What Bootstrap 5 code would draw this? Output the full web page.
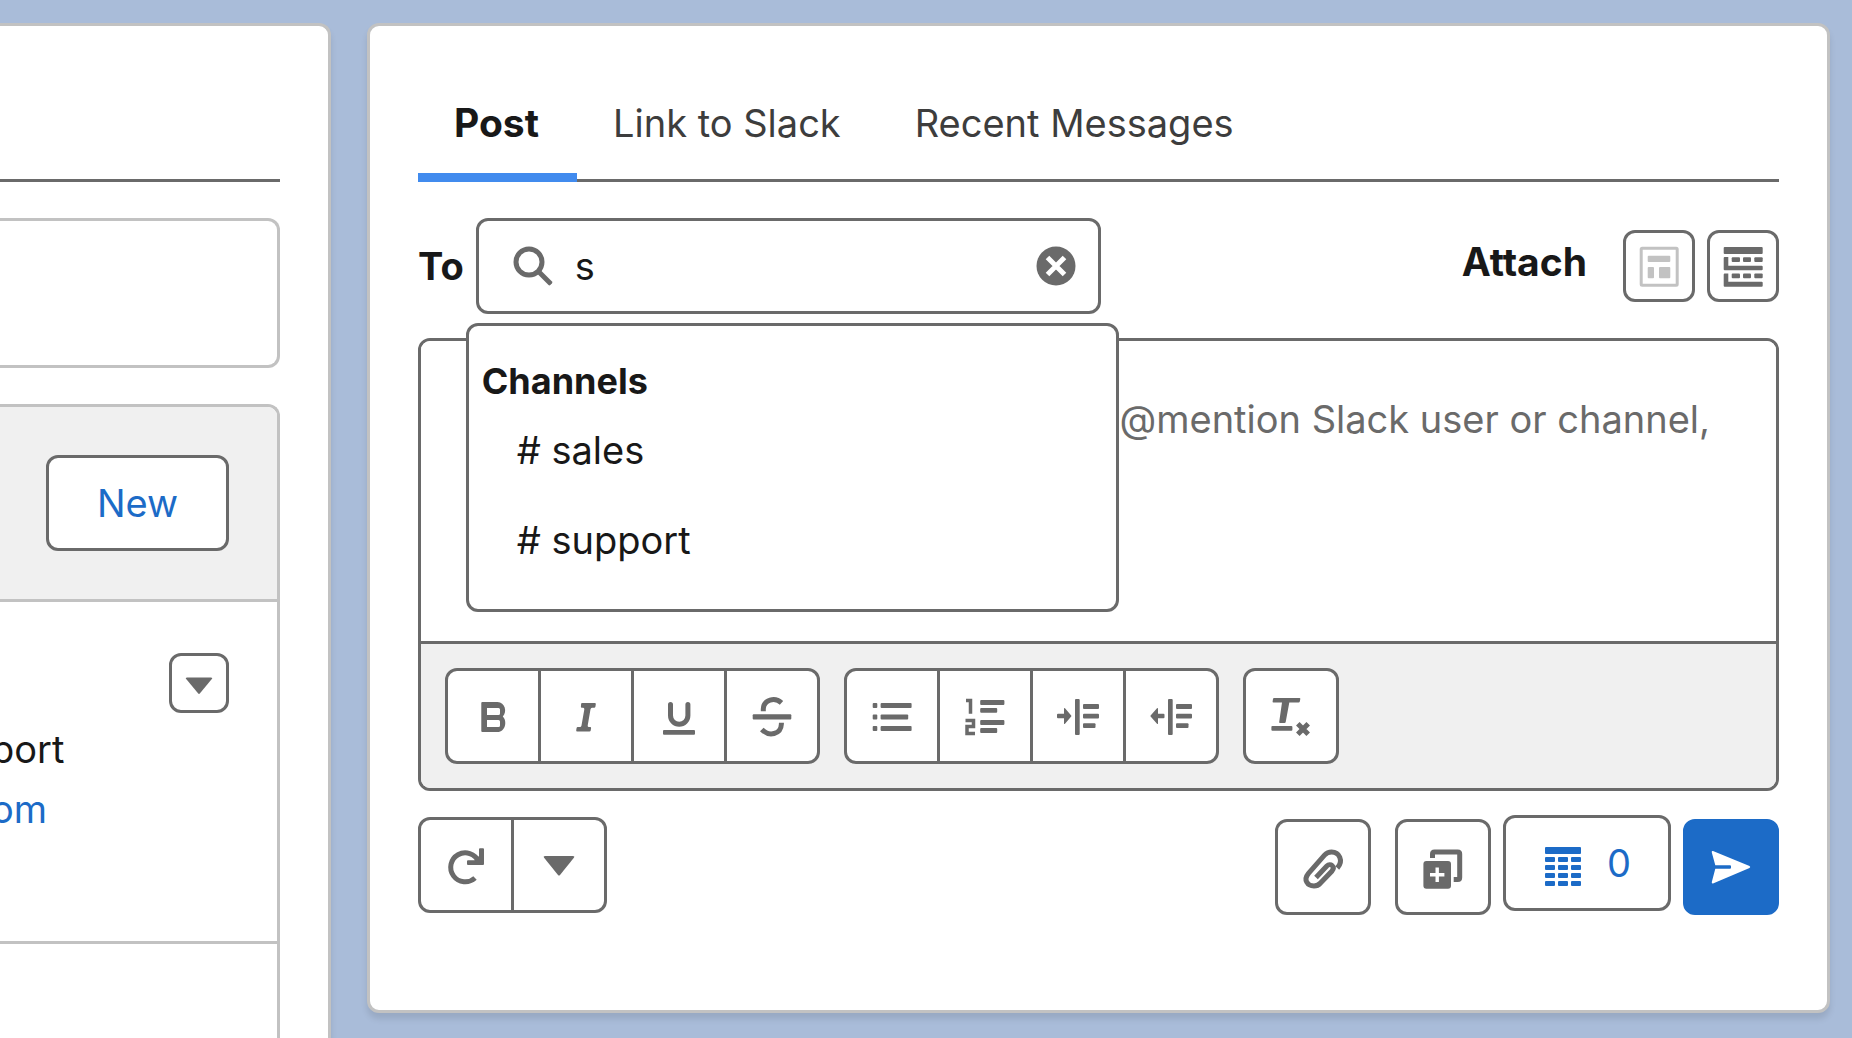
<!DOCTYPE html>
<html lang="en">
<head>
<meta charset="utf-8">
<meta name="viewport" content="width=device-width, initial-scale=1">
<title>Slack for Salesforce</title>
<link rel="stylesheet" href="https://cdn.jsdelivr.net/npm/bootstrap@5.3.0/dist/css/bootstrap.min.css">
<style>
:root { --ink:#181818; --line:#6a6a6a; --soft:#c2c2c2; --blue:#1c6bc7; --fill:#f0f0f0; }
body { background:#a9bcd9; color:var(--ink); font-family:Inter,"Liberation Sans",sans-serif; font-size:38px; line-height:60px; }
.page { gap:36px; padding:23px 22px 0 0; }
.panel { background:#fff; border:3px solid var(--soft); border-radius:12px; box-shadow:0 6px 6px rgba(0,0,0,.1); }
.side { flex:0 0 331px; border-left:0; border-bottom:0; border-radius:0 12px 0 0; padding:153px 48px 0 0; }
.side-rule { border-top:3px solid var(--line); margin-bottom:36px; }
.side-box { border:3px solid var(--soft); border-left:0; border-radius:0 12px 12px 0; }
.side-empty { height:150px; margin-bottom:36px; }
.side-list { border-bottom:0; border-bottom-right-radius:0; }
.side-head { background:var(--fill); border-bottom:3px solid var(--soft); border-top-right-radius:9px; padding:48px 48px 48px 0; }
.side-row { border-bottom:3px solid var(--soft); padding:51px 48px 0 0; height:342px; }
.side-text { margin:6px 0 0 -9px; }
.side-text a { color:var(--blue); }
.btn-line { --bs-btn-color:var(--line); --bs-btn-bg:#fff; --bs-btn-border-color:var(--line); --bs-btn-border-width:3px; --bs-btn-border-radius:12px; --bs-btn-padding-x:0; --bs-btn-padding-y:0; --bs-btn-hover-bg:#f3f3f3; --bs-btn-hover-color:var(--line); --bs-btn-hover-border-color:var(--line); --bs-btn-font-size:38px; --bs-btn-line-height:60px; --bs-btn-disabled-opacity:1; --bs-btn-disabled-bg:#fff; --bs-btn-disabled-border-color:var(--line); --bs-btn-disabled-color:var(--soft); display:inline-flex; align-items:center; justify-content:center; }
.btn-blue-text { --bs-btn-color:var(--blue); --bs-btn-hover-color:var(--blue); }
.sz-xs { width:60px; height:60px; }
.sz-sm { width:72px; height:72px; }
.sz-lg { width:96px; height:96px; }
.btn-new { width:183px; height:96px; flex:none; }
.btn-count { width:168px; height:96px; gap:24px; }
.btn-group > .btn-line { flex:0 0 96px; }
.btn-group > .btn.btn-line:not(:first-child) { margin-left:-3px !important; }
.btn-send { --bs-btn-bg:var(--blue); --bs-btn-color:#fff; --bs-btn-border-color:var(--blue); --bs-btn-hover-bg:#0b5cab; --bs-btn-hover-color:#fff; --bs-btn-hover-border-color:#0b5cab; }
.btn-clear, .btn-clear:hover { color:var(--line); }
.btn svg, .search svg { width:40px; height:40px; fill:currentColor; overflow:visible; flex:none; }
.btn svg .st, .search svg .st { fill:none; stroke:currentColor; stroke-width:5; }
.main { padding:67px 48px 95px; }
.tabs { border-bottom:3px solid var(--line); }
.tabs .nav-link { color:#3d3d3d; padding:0 38px 20px 36px; margin-bottom:-3px; border-bottom:9px solid transparent; }
.tabs .nav-link.active { color:var(--ink); font-size:39px; font-weight:700; border-color:#418bee; }
.to-row { margin-top:36px; gap:12px; }
.to-row label { font-weight:700; }
.search { width:625px; height:96px; border:3px solid var(--line); border-radius:12px; padding:0 22px 0 34px; gap:22px; color:var(--line); background:#fff; }
.search .form-control { border:0; padding:0; font-size:38px; line-height:60px; color:var(--ink); background:transparent; box-shadow:none; }
.suggest { top:105px; left:-10px; width:653px; border:3px solid var(--line); border-radius:12px; background:#fff; padding:31px 13px 24px; z-index:5; }
.suggest h2 { font-size:36px; line-height:48px; font-weight:700; margin:0; }
.suggest a { display:block; padding:15px 35px; color:var(--ink); text-decoration:none; }
.attach-label { font-size:39px; font-weight:700; padding-bottom:8px; margin-right:24px; }
.editor { margin-top:24px; border:3px solid var(--line); border-radius:12px; overflow:hidden; }
.editor textarea { display:block; height:300px; border:0; border-radius:0; resize:none; padding:48px 66px 0 48px; font-size:38px; line-height:60px; text-align:right; box-shadow:none; overflow:hidden; }
.editor textarea::placeholder { color:var(--line); }
.editor-bar { background:var(--fill); border-top:3px solid var(--line); padding:24px; gap:24px; }
.actions { margin-top:24px; min-height:100px; }
.gap-send { gap:12px; }
.gap-clip { margin-right:12px; }
</style>
</head>
<body>
<div class="page d-flex vh-100 overflow-hidden">
  <aside class="panel side d-flex flex-column overflow-hidden">
    <div class="side-rule flex-shrink-0"></div>
    <div class="side-box side-empty flex-shrink-0"></div>
    <div class="side-box side-list flex-grow-1">
      <div class="side-head d-flex justify-content-end">
        <button type="button" class="btn btn-line btn-blue-text btn-new">New</button>
      </div>
      <div class="side-row">
        <div class="d-flex justify-content-end">
          <button type="button" class="btn btn-line sz-xs" aria-label="Row actions"><svg viewBox="0 0 40 40"><path d="M8 14.5H32q2 0 .8 1.6L21 30.300q-1 1.200-2 0L7.200 16.100Q6 14.500 8 14.500Z"/></svg></button>
        </div>
        <div class="side-text">
          <div>port</div>
          <div><a href="#" class="text-decoration-none">om</a></div>
        </div>
      </div>
    </div>
  </aside>

  <main class="panel main flex-grow-1 align-self-start">
    <ul class="nav tabs">
      <li class="nav-item"><a class="nav-link active" aria-current="page" href="#">Post</a></li>
      <li class="nav-item"><a class="nav-link" href="#">Link to Slack</a></li>
      <li class="nav-item"><a class="nav-link" href="#">Recent Messages</a></li>
    </ul>

    <div class="to-row d-flex align-items-center">
      <label for="to">To</label>
      <div class="position-relative">
        <div class="search d-flex align-items-center">
          <svg viewBox="0 0 40 40" aria-hidden="true"><circle class="st" cx="16" cy="16" r="13"/><path d="M24.500 28 28 24.500 39 35.500q.8.900 0 1.800L37.300 39q-.9.800-1.800 0Z"/></svg>
          <input id="to" type="text" class="form-control" value="s" autocomplete="off">
          <button type="button" class="btn btn-clear p-0 border-0 d-flex" aria-label="Clear"><svg viewBox="0 0 40 40"><circle cx="20" cy="20" r="19.500"/><path d="M11.500 11.500 28.500 28.500M28.500 11.500 11.500 28.500" stroke="#fff" stroke-width="5"/></svg></button>
        </div>
        <div class="suggest position-absolute">
          <h2>Channels</h2>
          <a href="#"># sales</a>
          <a href="#"># support</a>
        </div>
      </div>
      <div class="ms-auto d-flex align-items-center gap-send">
        <span class="attach-label">Attach</span>
        <button type="button" class="btn btn-line sz-sm" disabled aria-label="Attach record layout"><svg viewBox="0 0 40 40"><rect x="2.200" y="2.200" width="36" height="37" rx="1" fill="none" stroke="currentColor" stroke-width="3"/><rect x="8.700" y="9.700" width="22.600" height="6.300" rx="1"/><rect x="8.700" y="21" width="6.300" height="11.300" rx="1"/><rect x="20" y="21" width="11.300" height="11.300" rx="1"/></svg></button>
        <button type="button" class="btn btn-line sz-sm" aria-label="Attach related list"><svg viewBox="0 0 40 40"><rect x=".7" y="1" width="39" height="7" rx="1"/><path d="M1.700 11h3.600v8.700h33.400q1 0 1 1v2.600q0 1-1 1h-37q-1 0-1-1V12q0-1 1-1ZM1.700 27.500h3.600v8.200h33.400q1 0 1 1v3q0 1-1 1h-37q-1 0-1-1v-11.200q0-1 1-1Z"/><g id="d"><rect x="8.700" y="11.300" width="8.300" height="4.700" rx="1"/><rect x="20" y="11.300" width="8" height="4.700" rx="1"/><rect x="31.300" y="11.300" width="8.400" height="4.700" rx="1"/></g><use href="#d" y="16.300"/></svg></button>
      </div>
    </div>

    <div class="editor">
      <textarea class="form-control" aria-label="Message" placeholder="@mention Slack user or channel,"></textarea>
      <div class="editor-bar d-flex">
        <div class="btn-group" role="group" aria-label="Text style">
          <button type="button" class="btn btn-line sz-lg" aria-label="Bold"><svg viewBox="0 0 40 40"><path fill-rule="evenodd" d="M9.300 6H24.500C32 6 34.500 16 29.800 20.500 34.500 25 32.500 36 24.500 36H9.300q-1 0-1-1V7q0-1 1-1ZM14 12v7h11.500q1.500 0 1.500-1.500v-4q0-1.500-1.500-1.500ZM14 24v7h11.500q1.500 0 1.500-1.500v-4q0-1.500-1.500-1.500Z"/></svg></button>
          <button type="button" class="btn btn-line sz-lg" aria-label="Italic"><svg viewBox="0 0 40 40"><path d="M16 7H28.800q1.200 0 1 1.200l-.4 2.500q-.2 1-1.200 1H26q-1.200 0-1.500 1.500L21.700 29.500Q21.500 31 23 31h1.200q1 0 .9 1l-.4 2.500q-.2 1-1.200 1H11.200q-1.200 0-1-1.200l.4-2.300q.2-1 1.200-1H14q1.200 0 1.500-1.500L18.300 13.500Q18.500 11.700 17.200 11.700H15.800q-1 0-.9-1l.2-2.700q.1-1 .9-1Z"/></svg></button>
          <button type="button" class="btn btn-line sz-lg" aria-label="Underline"><svg viewBox="0 0 40 40"><path class="st" stroke-linecap="round" d="M11.500 8.500V19.500a8.700 8.700 0 0 0 17.400 0V8.500"/><rect x="4" y="34" width="32" height="4.800" rx="1"/></svg></button>
          <button type="button" class="btn btn-line sz-lg" aria-label="Strikethrough"><svg viewBox="0 0 40 40"><rect x=".7" y="18.300" width="38.600" height="5.200" rx="1"/><path class="st" d="M11.300 15.300V13C11.600 3.500 23 .8 29.500 6.800M29.400 26.700V28C29 38.500 17 41 9.800 33.500"/></svg></button>
        </div>
        <div class="btn-group" role="group" aria-label="Lists and indent">
          <button type="button" class="btn btn-line sz-lg" aria-label="Bulleted list"><svg viewBox="0 0 40 40"><rect x=".7" y="7" width="4.600" height="5" rx="1"/><rect x=".7" y="18.500" width="4.600" height="5" rx="1"/><rect x=".7" y="30" width="4.600" height="5" rx="1"/><rect x="8.600" y="7" width="31" height="5" rx="1"/><rect x="8.600" y="18.500" width="27.600" height="5" rx="1"/><rect x="8.600" y="30" width="31" height="5" rx="1"/></svg></button>
          <button type="button" class="btn btn-line sz-lg" aria-label="Numbered list"><svg viewBox="0 0 40 40"><path d="M1 4.500H5.500V17.700M.5 24.500H8.500V30.500H2V37.500H10" fill="none" stroke="currentColor" stroke-width="3.500"/><rect x="15.200" y="4" width="24.200" height="5" rx="1"/><rect x="15.200" y="12" width="17" height="4.700" rx="1"/><rect x="15.200" y="24" width="24.200" height="5" rx="1"/><rect x="15.200" y="32" width="17" height="5" rx="1"/></svg></button>
          <button type="button" class="btn btn-line sz-lg" aria-label="Indent"><svg viewBox="0 0 40 40"><path d="M0 17.700H6V12.500q.3-1 1-.3L13.200 19.500q.4.500 0 1L7 27.800q-.7.600-1-.3V22.300H0q-1 0-1-1V18.700q0-1 1-1Z"/><rect x="17" y="3" width="4.700" height="36" rx="1"/><rect x="25" y="8" width="16" height="5" rx="1"/><rect x="25" y="17.700" width="16" height="4.700" rx="1"/><rect x="25" y="27.300" width="12.500" height="4.700" rx="1"/></svg></button>
          <button type="button" class="btn btn-line sz-lg" aria-label="Outdent"><svg viewBox="0 0 40 40"><path d="M12.500 17.700H7V12.500q-.3-1-1-.3L-.4 19.500q-.4.500 0 1L6 27.800q.7.600 1-.3V22.300h5.500q1 0 1-1V18.700q0-1-1-1Z"/><rect x="17" y="3" width="4.700" height="36" rx="1"/><rect x="25" y="8" width="16" height="5" rx="1"/><rect x="25" y="17.700" width="16" height="4.700" rx="1"/><rect x="25" y="27.300" width="12.500" height="4.700" rx="1"/></svg></button>
        </div>
        <button type="button" class="btn btn-line sz-lg" aria-label="Remove formatting"><svg viewBox="0 0 40 40"><path d="M3 2H28.500q1 0 .8 1l-.5 2.500q-.2 1-1.200 1H18.300L14.700 26q-.2 1-1.200 1H9q-1 0-.8-1L11 6.500H2.400q-1 0-.8-1L2 3q.2-1 1-1Z"/><rect x=".4" y="30" width="21" height="4.700" rx="1"/><path class="st" d="M26.800 27.800 37.200 38.200M37.200 27.800 26.800 38.200"/></svg></button>
      </div>
    </div>

    <div class="actions d-flex justify-content-between align-items-center">
      <div class="btn-group" role="group" aria-label="Refresh">
        <button type="button" class="btn btn-line sz-lg" aria-label="Refresh"><svg viewBox="0 0 40 40"><path class="st" d="M32.500 16.500A14.500 14.500 0 1 0 29 33"/><path d="M34 3.300h3q1 0 1 1V19q0 1-1 1H22q-1 0-1-1V16.300q0-1 1-1h6.500L33 11V4.300q0-1 1-1Z"/></svg></button>
        <button type="button" class="btn btn-line sz-lg" aria-label="More options"><svg viewBox="0 0 40 40"><path d="M6 11H34q2 0 .9 1.700L21 30q-1 1.200-2 0L5.100 12.700Q4 11 6 11Z"/></svg></button>
      </div>
      <div class="d-flex align-self-stretch align-items-end gap-send">
        <button type="button" class="btn btn-line sz-lg gap-clip" aria-label="Attach file"><svg viewBox="0 0 40 40"><path class="st" d="M34.300 21C41 13.500 36 5 28.600 5 25.500 5 23.300 6.200 21.500 8.200L5.500 26.300C0 33 4.500 39 11 39c3 0 5-1.300 6.500-3L29 24C32.500 19.500 27.500 15.500 23.800 19L13 30.500"/></svg></button>
        <button type="button" class="btn btn-line sz-lg" aria-label="Add template"><svg viewBox="0 0 40 40"><path class="st" d="M9.500 11V7q0-2 2-2H34.700q2 0 2 2V30.500q0 2-2 2h-4"/><path fill-rule="evenodd" d="M3.400 14H25q3 0 3 3V38.700q0 3-3 3H3.400q-3 0-3-3V17q0-3 3-3ZM12.500 20.500V26H7v3.400h5.500V35h3.400V29.400h5.500V26H15.900V20.500Z"/></svg></button>
        <button type="button" class="btn btn-line btn-blue-text btn-count align-self-start"><svg viewBox="0 0 40 40" aria-hidden="true"><rect x="2" y="4" width="36" height="7" rx="1"/><g id="r"><rect x="2" y="14" width="10" height="5" rx="1"/><rect x="15" y="14" width="10" height="5" rx="1"/><rect x="28" y="14" width="10" height="5" rx="1"/></g><use href="#r" y="8"/><use href="#r" y="16"/><use href="#r" y="24"/></svg>0</button>
        <button type="button" class="btn btn-line btn-send sz-lg" aria-label="Send"><svg viewBox="0 0 40 40"><path d="M2 4.100 38.500 19q1.500 1 0 2L2 36.400Q.5 36.800.8 35L4.300 21.800H19q1 0 1-1V19.200q0-1-1-1H4.300L.8 5.500Q.5 3.700 2 4.100Z"/></svg></button>
      </div>
    </div>
  </main>
</div>
<script src="https://cdn.jsdelivr.net/npm/bootstrap@5.3.0/dist/js/bootstrap.bundle.min.js"></script>
</body>
</html>
